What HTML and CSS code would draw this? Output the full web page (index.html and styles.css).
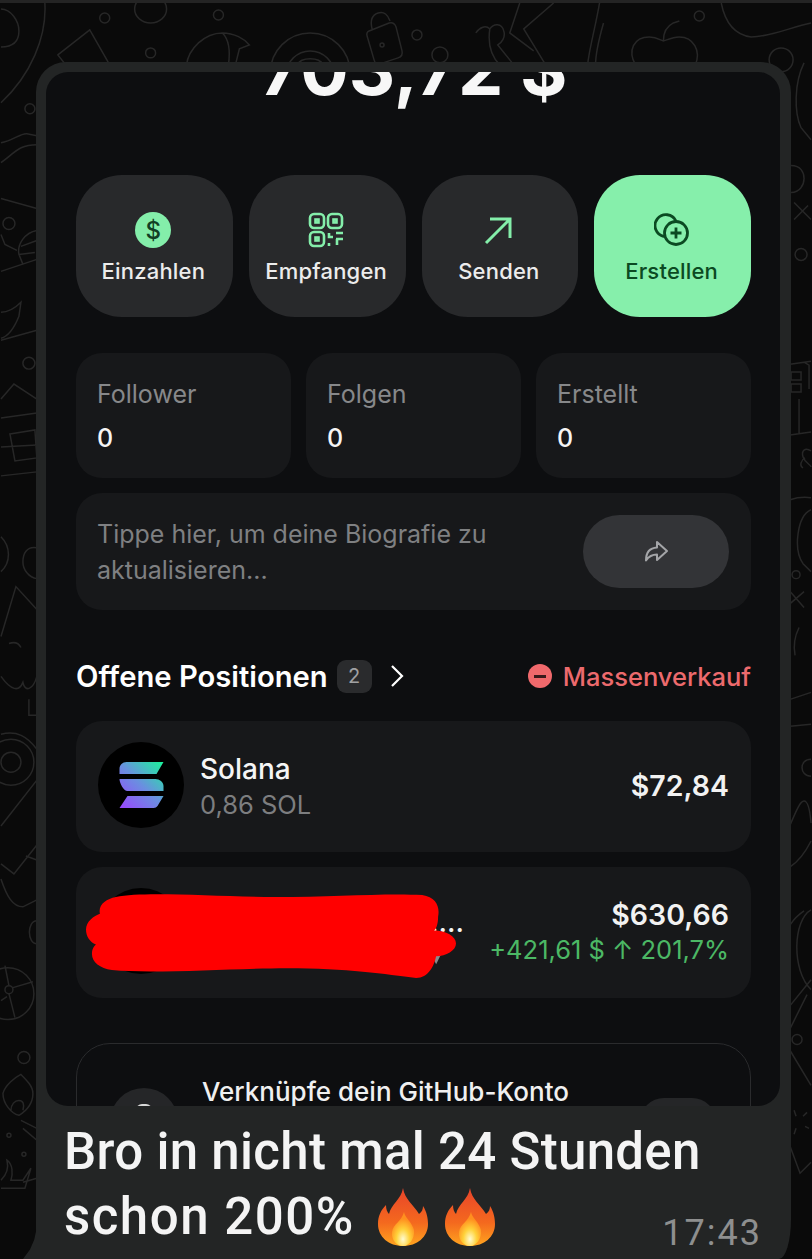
FILE: index.html
```html
<!DOCTYPE html>
<html lang="de">
<head>
	<title>Offene Positionen</title>
	<meta charset="utf-8">
	<link rel="stylesheet" href="styles.css">
</head>
<body>

<svg class="wallpaper" viewBox="0 0 812 1259" aria-hidden="true">
	<g fill="none" stroke="#272727" stroke-width="1.5">
		<!-- top strip -->
		<path d="M44 0c2 34-14 72-44 100M0 44c12 0 18-6 18-16S10 6 0 6"/>
		<path d="M57 52l32-25 20 35M89 27L57 52l8 10"/>
		<circle cx="104" cy="15" r="5"/>
		<circle cx="150" cy="50" r="5"/>
		<ellipse cx="150" cy="6" rx="16" ry="14"/>
		<circle cx="218" cy="12" r="5"/>
		<path d="M186 62c2-16 18-32 36-32 12 0 22 6 27 12l-10 4-4 16M222 30c6 6 8 18 6 32"/>
		<circle cx="310" cy="70" r="40"/>
		<circle cx="310" cy="72" r="24"/>
		<path d="M297 62c4-8 22-8 26 0"/>
		<path d="M369 28l20-8c4-1 6 1 7 4l6 24c1 4-1 6-4 7l-18 6c-3 1-5 0-6-4l-7-24c-1-3 0-4 2-5zM372 26c-2-8 0-14 6-16s10 2 12 8"/>
		<circle cx="382" cy="42" r="2"/>
		<circle cx="417" cy="32" r="5"/>
		<circle cx="440" cy="52" r="8"/>
		<path d="M476 30c4-6 10-8 14-4 4-6 12-6 14 2 2 6-2 12-6 14l16 20M490 26c-2 14 0 26 10 36M520 0l-10 30 24 18M546 62l-22-36 30-26M600 0c-4 24-10 44-12 62M604 20c-4 14-8 30-8 42"/>
		<path d="M636 62c-8-14-2-28 14-28 8 0 12 4 14 4s8-4 16-4c14 0 22 14 16 28M664 38c0-8 2-14 10-18l6-2"/>
		<circle cx="700" cy="13" r="5"/>
		<path d="M722 0c4 20 14 32 30 34 20 0 40-10 60-14"/>
		<circle cx="782" cy="57" r="12"/>

		<!-- left strip -->
		<circle cx="29" cy="106" r="5"/>
		<path d="M0 140c12-2 20-10 26-9l10 2M0 160c14-10 18-18 36-18"/>
		<path d="M0 196l36 10"/>
		<circle cx="8" cy="221" r="6"/>
		<path d="M36 228c-12 2-20 14-18 24l4 10M20 244l16-6M18 252l16-2M0 232l4 10 12 6"/>
		<path d="M0 269l36-12M0 310c8 0 14-4 20-10l-2 14c-4 10-10 20-18 22M0 338l36-10"/>
		<circle cx="28" cy="361" r="6"/>
		<path d="M0 397l13-15 23 15M0 416l36-5M9 432l25-4 2 28-22 3zM0 445l36-2M0 474l36-4"/>
		<path d="M0 535c10 10 10 26 0 35M36 546c-10-2-14 6-14 14s6 16 14 17"/>
		<path d="M0 635l15-50 21 23M8 642c6-2 10 0 12 4"/>
		<path d="M0 675c10 14 18 16 22 6 2 10 10 8 14-6M28 698v16h8"/>
		<circle cx="10" cy="761" r="23"/>
		<circle cx="10" cy="761" r="10"/>
		<path d="M0 733c16-4 26 2 36 15M36 779L0 825M0 863l13 10 23-29M25 855l11 4M0 878c6 18 12 28 22 28l14-7"/>
		<path d="M36 920c-10 0-10 23 0 23"/>
		<circle cx="7" cy="993" r="26"/>
		<circle cx="8" cy="989" r="4"/>
		<path d="M12 987l20-6M8 993l6 24M0 1000l6-4M4 965l4 20"/>
		<circle cx="23" cy="1057" r="6"/>
		<path d="M2 1093c2-8 12-16 18-19 6 6 12 12 12 19 0 10-6 17-14 22-8-2-16-12-16-22zM10 1110c0-6 4-10 8-10s6 4 4 10M20 1120l16 8M22 1128l14 12"/>
		<circle cx="8" cy="1135" r="2"/>
		<circle cx="23" cy="1154" r="2"/>
		<path d="M0 1180c6-6 8-12 6-20 6 4 6 14 4 20h12l8-12-6 20H0M22 1182l14-4"/>

		<!-- right strip -->
		<path d="M805 60c-10 20-10 50-3 65l10 12M792 163c10 0 13 7 13 13s-4 14-13 14M795 200l17 17M795 217l14-14"/>
		<circle cx="802" cy="252" r="6"/>
		<path d="M791 362l21-3M805 360l5 3v24M792 370h10v8h-10zM792 382h10v8h-10zM800 397v35M791 433l21-3"/>
		<path d="M812 449c-6-4-10 0-8 6s8 8 8 10M804 466c-4-2-2-8 2-10"/>
		<path d="M791 498c6-2 14-3 21-2M812 508c-14 6-18 40-8 54l8 8"/>
		<circle cx="797" cy="573" r="4"/>
		<path d="M791 590l14 16M805 590l-14 12M800 626c-4 8-6 18-4 28M791 698l21-7M791 725l21-2"/>
		<path d="M812 758c-12 0-12 17 0 17M791 824c6-14 10-24 14-24 4 0 6 10 7 22M791 866c6-4 14-12 21-26"/>
		<path d="M812 909c-18 10-20 60 0 80M791 924c4-6 8-10 14-14M791 1005l21-26M791 1028l17-34"/>
		<circle cx="798" cy="1039" r="5"/>
		<path d="M791 1050l21 35M795 1110l2 6M808 1112l-4 4M806 1126l4 2M797 1128l-2 6M791 1146l10 27 11-11"/>
	</g>
</svg>

<main class="bubble">
	<div class="screen">
		<div class="balance">703,72 $</div>

		<div class="actions">
			<div class="action">
				<span class="coin">$</span>
				<span>Einzahlen</span>
			</div>
			<div class="action">
				<svg class="icon" viewBox="0 0 36 36" fill="none" stroke="#84eeaa" stroke-width="2.6">
					<rect x="2" y="2" width="14" height="14" rx="4"/>
					<rect x="20" y="2" width="14" height="14" rx="4"/>
					<rect x="2" y="20" width="14" height="14" rx="4"/>
					<rect x="7.5" y="7.5" width="3" height="3"/>
					<rect x="25.5" y="7.5" width="3" height="3"/>
					<rect x="7.5" y="25.5" width="3" height="3"/>
					<path d="M21 21v4h4M28 21h7M28 27h7M29 27v6M21 31v3"/>
				</svg>
				<span>Empfangen</span>
			</div>
			<div class="action">
				<svg class="icon" viewBox="0 0 36 36" fill="none" stroke="#84eeaa" stroke-width="3">
					<path d="M5 31L28 8M9 7h20v19"/>
				</svg>
				<span>Senden</span>
			</div>
			<div class="action action-main">
				<svg class="icon" viewBox="0 0 36 36" fill="none" stroke="#0b4a22" stroke-width="2.8">
					<path d="M10 24.500A11 11 0 1 1 22 9"/>
					<circle cx="22" cy="21" r="11.500"/>
					<path d="M22 15.500v11M16.500 21h11"/>
				</svg>
				<span>Erstellen</span>
			</div>
		</div>

		<div class="stats">
			<div class="stat">
				<span class="stat-label">Follower</span>
				<span class="stat-value">0</span>
			</div>
			<div class="stat">
				<span class="stat-label">Folgen</span>
				<span class="stat-value">0</span>
			</div>
			<div class="stat">
				<span class="stat-label">Erstellt</span>
				<span class="stat-value">0</span>
			</div>
		</div>

		<div class="bio">
			<p>Tippe hier, um deine Biografie zu aktualisieren...</p>
			<div class="share">
				<svg viewBox="0 0 26 26" fill="none" stroke="#a4a5a8" stroke-width="2" stroke-linejoin="round">
					<path d="M14 3l10 9-10 9v-5.500c-5 0-8 1.500-11 6 0-7 3-12.500 11-13z"/>
				</svg>
			</div>
		</div>

		<div class="section-head">
			<div class="section-title">
				<h2>Offene Positionen</h2>
				<span class="count">2</span>
				<svg class="chevron" viewBox="0 0 14 24" fill="none" stroke="#fff" stroke-width="2.200">
					<path d="M2 2l10 10L2 22"/>
				</svg>
			</div>
			<div class="sell-all">
				<span class="minus"></span>
				<span>Massenverkauf</span>
			</div>
		</div>

		<div class="position">
			<div class="avatar">
				<svg viewBox="0 0 44 46">
					<defs>
						<linearGradient id="sol" x1="0" y1="46" x2="44" y2="0" gradientUnits="userSpaceOnUse">
							<stop offset="0" stop-color="#9b45ff"/>
							<stop offset="0.5" stop-color="#6a8fe0"/>
							<stop offset="1" stop-color="#19f59a"/>
						</linearGradient>
					</defs>
					<path fill="url(#sol)" d="M7 0h37l-7 12H0V7c0-4 3-7 7-7zM0 17h36c4 0 8 3 8 7v5H8c-4 0-8-8-8-12zM8 34h36l-6 10c-1 1-2 2-4 2H0z"/>
				</svg>
			</div>
			<div class="position-name">
				<span class="name">Solana</span>
				<span class="amount">0,86 SOL</span>
			</div>
			<div class="position-value">
				<span class="value">$72,84</span>
			</div>
		</div>

		<div class="position">
			<div class="avatar"></div>
			<div class="position-name position-hidden">
				<span class="name">....</span>
			</div>
			<div class="position-value">
				<span class="value">$630,66</span>
				<span class="gain">+421,61 $ ↑ 201,7%</span>
			</div>
			<svg class="scribble" viewBox="0 0 372 88" preserveAspectRatio="none" aria-hidden="true">
				<path fill="#8a8b8d" d="M346 60h12l-6 12z"/>
				<path fill="#f00" d="M30 4C60-2 130 4 190 4s110-4 148-2c14 2 18 12 16 22 0 8-2 12-4 14 12 0 22 6 22 13s-10 13-20 13c-2 10-8 22-20 22-30-4-70-10-130-10C150 76 70 82 26 78 14 76 6 70 6 62c0-6 2-8 4-10C4 50 0 44 0 37c0-8 8-14 14-16C12 12 20 6 30 4z"/>
			</svg>
		</div>

		<div class="github">
			<div class="github-badge"><span></span></div>
			<span class="github-text">Verknüpfe dein GitHub-Konto</span>
			<div class="github-btn"></div>
		</div>
	</div>

	<div class="caption">
		<p>Bro in nicht mal 24 Stunden</p>
		<p class="caption-last">schon 200%
			<svg class="flame" viewBox="0 0 50 58">
				<use href="#fire"/>
			</svg>
			<svg class="flame" viewBox="0 0 50 58">
				<defs>
					<linearGradient id="flameout" x1="0" y1="0" x2="0" y2="1">
						<stop offset="0" stop-color="#e8442a"/>
						<stop offset="0.6" stop-color="#f4691e"/>
						<stop offset="1" stop-color="#ffa51f"/>
					</linearGradient>
					<radialGradient id="flamein" cx="0.5" cy="0.8" r="0.6">
						<stop offset="0" stop-color="#fffbd0"/>
						<stop offset="0.5" stop-color="#ffd23a"/>
						<stop offset="1" stop-color="#ff8f1f"/>
					</radialGradient>
					<g id="fire">
						<path fill="url(#flameout)" d="M25 0c2 12 10 16 16 26 3-2 4-5 4-8 4 6 5 13 5 18 0 13-11 22-25 22S0 49 0 36c0-8 3-14 8-19 0 4 1 7 3 9 2-10 12-14 14-26z"/>
						<path fill="url(#flamein)" d="M26 24c1 6 8 10 10 18 1 9-5 16-11 16S13 52 14 44c1-8 10-11 12-20z"/>
					</g>
				</defs>
				<use href="#fire"/>
			</svg>
		</p>
		<span class="time">17:43</span>
	</div>
</main>

</body>
</html>
```

FILE: styles.css
```css
html,
body {
	margin: 0;
	height: 100%;
}
body {
	position: relative;
	height: 1259px;
	overflow: hidden;
	background: #0a0a0a;
	font-family: Inter, "Liberation Sans", sans-serif;
	color: #f2f2f2;
}
p,
h2 {
	margin: 0;
}
.wallpaper {
	position: absolute;
	left: 0;
	top: 0;
	width: 812px;
	height: 1259px;
	border-top: 3px solid #242424;
	box-sizing: border-box;
}
.bubble {
	position: relative;
	box-sizing: border-box;
	width: 755px;
	height: 1197px;
	margin: 62px 0 0 36px;
	padding: 10px 11px 0 10px;
	display: flex;
	flex-direction: column;
	background: #232525;
	border-radius: 30px 30px 0 0;
	border-bottom-right-radius: 12px 40px;
}
/* tail of the message */
.bubble::before {
	content: "";
	position: absolute;
	left: -13px;
	bottom: 0;
	width: 14px;
	height: 32px;
	background: #232525;
	clip-path: polygon(100% 0, 80% 40%, 50% 70%, 0 100%, 100% 100%);
}
.screen {
	height: 1034px;
	flex: none;
	overflow: hidden;
	box-sizing: border-box;
	padding: 0 29px 0 30px;
	background: #0d0e10;
	border-radius: 22px;
}

/* balance, cut by the top of the shot */
.balance {
	height: 131px;
	margin-top: -28px;
	text-align: center;
	font-size: 72px;
	font-weight: 700;
	line-height: 50px;
	color: #f7f7f7;
}

.actions {
	display: grid;
	grid-template-columns: repeat(4, 1fr);
	gap: 16px;
}
.action {
	height: 142px;
	display: flex;
	flex-direction: column;
	align-items: center;
	justify-content: flex-start;
	padding-top: 37px;
	padding-right: 2px;
	box-sizing: border-box;
	background: #28292b;
	border-radius: 46px;
	font-size: 22px;
	font-weight: 500;
	letter-spacing: 0.2px;
	color: #ececec;
}
.action-main {
	background: #86efab;
	color: #0b4a22;
}
.icon,
.coin {
	width: 36px;
	height: 36px;
	margin-bottom: 10px;
	flex: none;
}
.coin {
	display: flex;
	align-items: center;
	justify-content: center;
	border-radius: 50%;
	background: #84eeaa;
	color: #123f24;
	font-size: 24px;
	font-weight: 500;
}

.stats {
	display: grid;
	grid-template-columns: repeat(3, 1fr);
	gap: 15px;
	margin-top: 36px;
}
.stat {
	height: 125px;
	box-sizing: border-box;
	padding: 26px 21px 0;
	display: flex;
	flex-direction: column;
	gap: 14px;
	background: #17181a;
	border-radius: 26px;
	font-size: 25px;
}
.stat-label {
	color: #87888a;
}
.stat-value {
	color: #f5f5f5;
	font-weight: 500;
}

.bio {
	display: flex;
	align-items: center;
	justify-content: space-between;
	height: 117px;
	margin-top: 15px;
	padding: 0 22px 0 21px;
	background: #17181a;
	border-radius: 26px;
}
.bio p {
	width: 440px;
	font-size: 25px;
	line-height: 36px;
	color: #7f8082;
}
.share {
	width: 146px;
	height: 73px;
	flex: none;
	display: flex;
	align-items: center;
	justify-content: center;
	background: #333437;
	border-radius: 37px;
}
.share svg {
	width: 26px;
	height: 26px;
}

.section-head {
	display: flex;
	align-items: center;
	justify-content: space-between;
	height: 34px;
	margin: 49px 0 28px;
}
.section-title {
	display: flex;
	align-items: center;
}
.section-title h2 {
	font-size: 29.200px;
	font-weight: 600;
	color: #fff;
}
.count {
	width: 35px;
	height: 33px;
	margin-left: 9px;
	display: flex;
	align-items: center;
	justify-content: center;
	background: #2a2b2d;
	border-radius: 9px;
	font-size: 20px;
	color: #a0a1a3;
}
.chevron {
	width: 14px;
	height: 24px;
	margin-left: 18px;
}
.sell-all {
	display: flex;
	align-items: center;
	gap: 11px;
	font-size: 25.500px;
	font-weight: 500;
	color: #ec6a6d;
}
.minus {
	position: relative;
	width: 24px;
	height: 24px;
	border-radius: 50%;
	background: #f0696c;
}
.minus::after {
	content: "";
	position: absolute;
	left: 6px;
	right: 6px;
	top: 10.500px;
	height: 3px;
	background: #3a1a1c;
}

.position {
	position: relative;
	display: flex;
	align-items: center;
	height: 131px;
	margin-bottom: 15px;
	padding: 0 22px;
	background: #17181a;
	border-radius: 26px;
}
.avatar {
	width: 86px;
	height: 86px;
	margin-top: -3px;
	flex: none;
	display: flex;
	align-items: center;
	justify-content: center;
	background: #000;
	border-radius: 50%;
}
.avatar svg {
	width: 45px;
	height: 46px;
}
.position-name {
	display: flex;
	flex-direction: column;
	margin-left: 16px;
}
.position-hidden {
	width: 264px;
	margin-top: -22px;
	align-items: flex-end;
}
.name {
	font-size: 28px;
	font-weight: 500;
	line-height: 36px;
	color: #f5f5f5;
}
.amount {
	font-size: 25.500px;
	line-height: 36px;
	color: #7d7e80;
}
.position-value {
	margin-left: auto;
	margin-top: -3px;
	display: flex;
	flex-direction: column;
	align-items: flex-end;
	gap: 2px;
}
.value {
	font-size: 28.500px;
	font-weight: 600;
	color: #f2f2f2;
}
.gain {
	font-size: 25.500px;
	color: #4cb865;
}
.scribble {
	position: absolute;
	left: 10px;
	top: 26px;
	width: 370px;
	height: 87px;
}

.github {
	position: relative;
	display: flex;
	height: 180px;
	margin-top: 45px;
	box-sizing: border-box;
	border: 1.500px solid #2a2b2d;
	border-radius: 34px;
}
.github-badge {
	width: 68px;
	height: 68px;
	margin: 44px 0 0 33px;
	flex: none;
	background: #252628;
	border-radius: 50%;
}
.github-badge span {
	display: block;
	width: 16px;
	height: 6px;
	margin: 16px auto 0;
	background: #d8d8d8;
	border-radius: 8px 8px 0 0;
}
.github-text {
	margin: 32px 0 0 24px;
	font-size: 26px;
	font-weight: 500;
	color: #f0f0f0;
}
.github-btn {
	width: 76px;
	height: 60px;
	margin: 54px 34px 0 auto;
	background: #252628;
	border-radius: 24px;
}

.caption {
	padding: 13px 0 0 18px;
	font-family: Roboto, Inter, sans-serif;
	font-size: 51px;
	font-weight: 500;
	line-height: 65px;
	letter-spacing: 0.3px;
	color: #f4f4f4;
	white-space: nowrap;
}
.caption-last {
	display: flex;
	align-items: center;
	letter-spacing: 1.500px;
}
.flame {
	width: 50px;
	height: 58px;
	margin-left: 17px;
}
.flame:first-of-type {
	margin-left: 23px;
}
.time {
	position: absolute;
	right: 29px;
	bottom: 6px;
	font-size: 36px;
	font-weight: 400;
	line-height: 40px;
	letter-spacing: 2px;
	color: #8e8f8f;
}
```
